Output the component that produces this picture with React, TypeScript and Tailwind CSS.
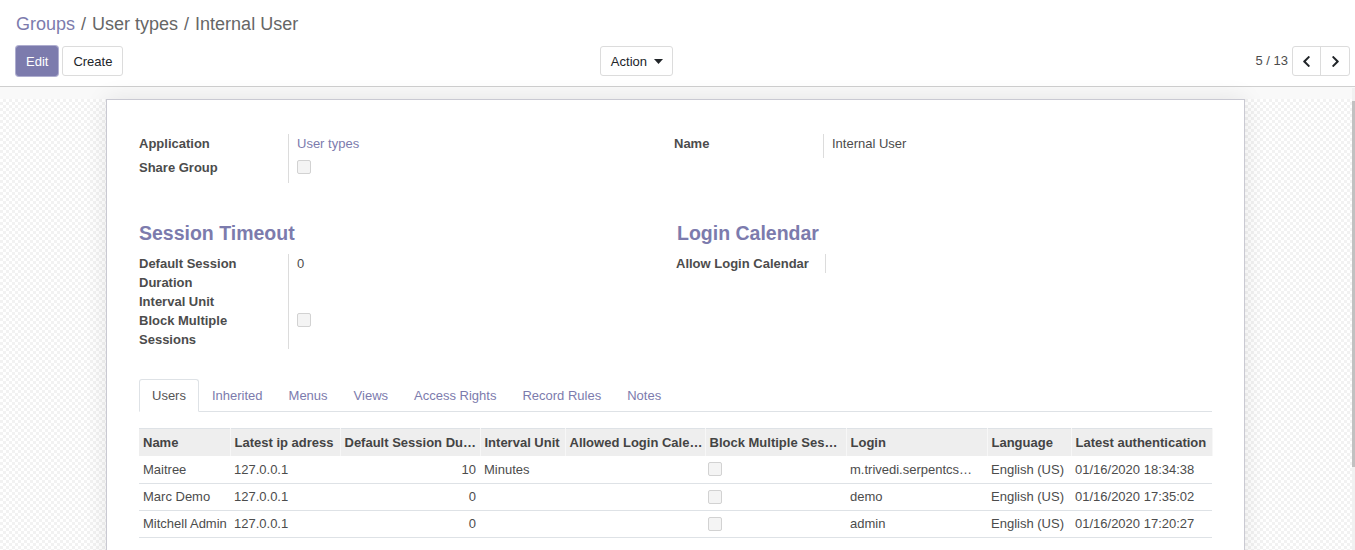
import { FaChevronLeft, FaChevronRight } from "react-icons/fa";

const users = [
  { name: "Maitree", ip: "127.0.0.1", duration: "10", unit: "Minutes", login: "m.trivedi.serpentcs@gmail.com", lang: "English (US)", auth: "01/16/2020 18:34:38" },
  { name: "Marc Demo", ip: "127.0.0.1", duration: "0", unit: "", login: "demo", lang: "English (US)", auth: "01/16/2020 17:35:02" },
  { name: "Mitchell Admin", ip: "127.0.0.1", duration: "0", unit: "", login: "admin", lang: "English (US)", auth: "01/16/2020 17:20:27" },
];

const columns = [
  { label: "Name", w: "w-[91px]" },
  { label: "Latest ip adress", w: "w-[110px]" },
  { label: "Default Session Duration", w: "w-[140px]" },
  { label: "Interval Unit", w: "w-[85px]" },
  { label: "Allowed Login Calendar", w: "w-[140px]" },
  { label: "Block Multiple Sessions", w: "w-[141px]" },
  { label: "Login", w: "w-[141px]" },
  { label: "Language", w: "w-[84px]" },
  { label: "Latest authentication", w: "w-[141px]" },
];

const tabs = ["Users", "Inherited", "Menus", "Views", "Access Rights", "Record Rules", "Notes"];

function Checkbox({ className = "" }: { className?: string }) {
  return <span className={`block h-[14px] w-[14px] rounded-[2px] border border-[#d2d2d2] bg-[#f4f4f4] ${className}`} />;
}

function Label({ children, h }: { children: React.ReactNode; h: string }) {
  return (
    <div className={`w-[150px] shrink-0 border-r border-[#dcdcdc] pr-4 font-bold text-[#4c4c4c] ${h}`}>{children}</div>
  );
}

export default function App() {
  return (
    <div className="relative flex h-[550px] w-full flex-col overflow-hidden bg-white font-['Liberation_Sans',Arial,sans-serif] text-[13px] leading-[19px] text-[#4c4c4c]">
      <div className="h-px bg-[#6f6e9f]" />

      {/* control panel */}
      <div className="border-b border-[#cfcfcf] pl-4 pr-[5px]">
        <div className="flex h-[46px] items-center pt-[3px] text-[18px] text-[#666]">
          <span className="text-[#7C7BAD]">Groups</span>
          <span className="px-[6px]">/</span>
          <span>User types</span>
          <span className="px-[6px]">/</span>
          <span>Internal User</span>
        </div>
        <div className="flex h-[40px] items-start">
          <div className="flex w-[657px] items-start justify-between">
            <div className="flex items-center gap-[4px]">
              <button className="h-[30px] rounded-[3px] border border-[#7C7BAD] bg-[#7C7BAD] px-[9px] text-white shadow-[0_0_0_1px_#aeadcf]">Edit</button>
              <button className="h-[30px] rounded-[3px] border border-[#dcdcdc] bg-white px-[10px] text-[#212529]">Create</button>
            </div>
            <button className="flex h-[30px] items-center gap-[7px] rounded-[3px] border border-[#dcdcdc] bg-white pl-[10px] pr-[9px] text-[#212529]">
              Action
              <svg width="9" height="5" viewBox="0 0 9 5"><path d="M0 0h9L4.5 5z" fill="#212529" /></svg>
            </button>
          </div>
          <div className="flex flex-1 items-center justify-end gap-[4px]">
            <span className="leading-[30px] text-[#4c4c4c]">5 / 13</span>
            <div className="flex h-[30px] rounded-[3px] border border-[#dcdcdc]">
              <button className="flex w-[28px] items-center justify-center border-r border-[#dcdcdc] text-[#212529]">
                <FaChevronLeft size={13} />
              </button>
              <button className="flex w-[28px] items-center justify-center text-[#212529]">
                <FaChevronRight size={13} />
              </button>
            </div>
          </div>
        </div>
      </div>

      {/* sheet background */}
      <div className="flex-1 bg-[image:repeating-conic-gradient(#f2f2f2_0_25%,#ffffff_0_50%)] bg-[length:6px_6px]">
        <div className="h-[12px] bg-[#f9f9f9]" />
        <div className="ml-[106px] w-[1139px] border border-[#c9c9d2] bg-white px-[32px] pt-[34px] shadow-[0_0_22px_rgba(0,0,0,0.09)]">
          {/* group 1 */}
          <div className="grid grid-cols-[535px_1fr] items-start">
            <div>
              <div className="flex">
                <Label h="h-[24px]">Application</Label>
                <div className="pl-2 text-[#7C7BAD]">User types</div>
              </div>
              <div className="flex">
                <Label h="h-[25px]">Share Group</Label>
                <div className="pl-2 pt-[2px]">
                  <Checkbox />
                </div>
              </div>
            </div>
            <div className="flex">
              <Label h="h-[24px]">Name</Label>
              <div className="pl-2">Internal User</div>
            </div>
          </div>

          {/* group 2 */}
          <div className="mt-[38px] grid grid-cols-[535px_1fr] items-start">
            <div>
              <div className="mb-[9px] text-[19.5px] font-bold leading-[24px] text-[#7C7BAD]">Session Timeout</div>
              <div className="flex">
                <Label h="h-[38px]">Default Session Duration</Label>
                <div className="pl-2">0</div>
              </div>
              <div className="flex">
                <Label h="h-[19px]">Interval Unit</Label>
              </div>
              <div className="flex">
                <Label h="h-[38px]">Block Multiple Sessions</Label>
                <div className="pl-2 pt-[2px]">
                  <Checkbox />
                </div>
              </div>
            </div>
            <div>
              <div className="mb-[9px] pl-[3px] text-[19.5px] font-bold leading-[24px] text-[#7C7BAD]">Login Calendar</div>
              <div className="flex pl-[2px]">
                <Label h="h-[19px]">Allow Login Calendar</Label>
              </div>
            </div>
          </div>

          {/* tabs */}
          <div className="mt-[30px] flex border-b border-[#dee2e6]">
            {tabs.map((t, i) => (
              <div
                key={t}
                className={
                  i === 0
                    ? "-mb-px rounded-t-[3px] border border-[#dee2e6] border-b-white bg-white px-[12px] py-[6px] text-[#555]"
                    : "-mb-px border border-transparent px-[12px] py-[6px] text-[#7C7BAD]"
                }
              >
                {t}
              </div>
            ))}
          </div>

          {/* users table */}
          <table className="mt-[16px] w-full table-fixed border-collapse border-t border-[#dee2e6]">
            <colgroup>
              {columns.map((c) => (
                <col key={c.label} className={c.w} />
              ))}
            </colgroup>
            <thead>
              <tr className="h-[27.5px] bg-[#eeeeee]">
                {columns.map((c) => (
                  <th key={c.label} className="truncate border-r border-[#f7f7f7] pl-[4px] pr-[2px] text-left font-bold text-[#444]">
                    {c.label}
                  </th>
                ))}
              </tr>
            </thead>
            <tbody>
              {users.map((u) => (
                <tr key={u.name} className="h-[27px] border-b border-[#dee2e6]">
                  <td className="whitespace-nowrap pl-[4px]">{u.name}</td>
                  <td className="truncate px-[4px]">{u.ip}</td>
                  <td className="truncate px-[4px] text-right">{u.duration}</td>
                  <td className="truncate px-[4px]">{u.unit}</td>
                  <td className="px-[4px]" />
                  <td className="px-[3px]">
                    <Checkbox />
                  </td>
                  <td className="truncate pl-[4px] pr-[2px]">{u.login}</td>
                  <td className="truncate px-[4px]">{u.lang}</td>
                  <td className="truncate px-[4px]">{u.auth}</td>
                </tr>
              ))}
            </tbody>
          </table>
          <div className="h-[40px]" />
        </div>
      </div>

      {/* scrollbar */}
      <div className="absolute bottom-0 right-0 top-[88px] w-[3px] bg-[#f1f1f1]">
        <div className="mt-[13px] h-[366px] w-full bg-[#c1c1c1]" />
      </div>
    </div>
  );
}
